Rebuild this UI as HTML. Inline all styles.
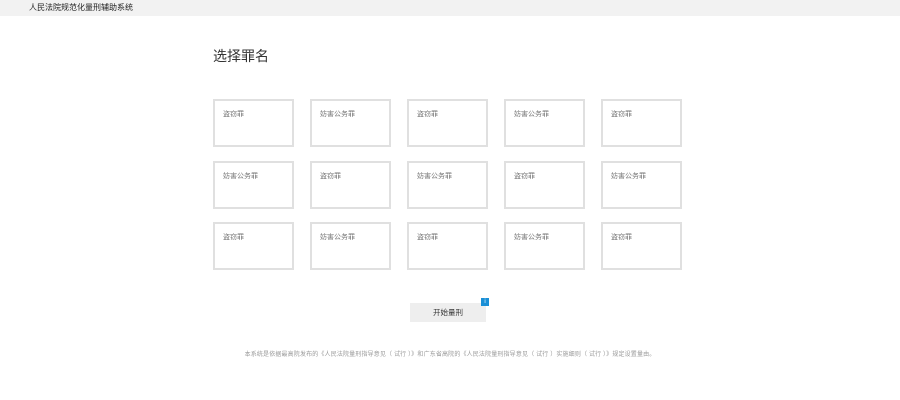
<!DOCTYPE html>
<html><head><meta charset="utf-8"><style>
body{margin:0;width:900px;height:400px;background:#fff;font-family:"Liberation Sans","Noto Sans CJK SC",sans-serif;position:relative;overflow:hidden}
.hd{height:16px;background:#f2f2f2;font-size:8px;line-height:15px;color:#222;padding-left:29px}
.t{position:absolute;left:213px;top:46px;font-size:14px;color:#333}
.c{position:absolute;width:77px;height:44px;border:2px solid #e0e0e0;font-size:7px;color:#777;box-sizing:content-box}
.c span{position:absolute;left:8px;top:8px}
.b{position:absolute;left:410px;top:303px;width:76px;height:19px;background:#eee;font-size:7.5px;color:#333;text-align:center;line-height:19px}
.bd{position:absolute;left:481px;top:298px;width:8px;height:8px;background:#1a8fd6;color:#fff;font-size:6px;line-height:8px;text-align:center}
.f{position:absolute;left:0;width:900px;top:349px;text-align:center;font-size:6px;color:#999;letter-spacing:0.15px}
</style></head><body>
<div class="hd">人民法院规范化量刑辅助系统</div>
<div class="t">选择罪名</div>
<div class="c" style="left:213px;top:99px"><span>盗窃罪</span></div>
<div class="c" style="left:310px;top:99px"><span>妨害公务罪</span></div>
<div class="c" style="left:407px;top:99px"><span>盗窃罪</span></div>
<div class="c" style="left:504px;top:99px"><span>妨害公务罪</span></div>
<div class="c" style="left:601px;top:99px"><span>盗窃罪</span></div>
<div class="c" style="left:213px;top:161px"><span>妨害公务罪</span></div>
<div class="c" style="left:310px;top:161px"><span>盗窃罪</span></div>
<div class="c" style="left:407px;top:161px"><span>妨害公务罪</span></div>
<div class="c" style="left:504px;top:161px"><span>盗窃罪</span></div>
<div class="c" style="left:601px;top:161px"><span>妨害公务罪</span></div>
<div class="c" style="left:213px;top:222px"><span>盗窃罪</span></div>
<div class="c" style="left:310px;top:222px"><span>妨害公务罪</span></div>
<div class="c" style="left:407px;top:222px"><span>盗窃罪</span></div>
<div class="c" style="left:504px;top:222px"><span>妨害公务罪</span></div>
<div class="c" style="left:601px;top:222px"><span>盗窃罪</span></div>
<div class="b">开始量刑</div>
<div class="bd">i</div>
<div class="f">本系统是依据最高院发布的《人民法院量刑指导意见（ 试行 ）》和广东省高院的《人民法院量刑指导意见（ 试行 ）实施细则（ 试行 ）》规定设置量由。</div>
</body></html>
